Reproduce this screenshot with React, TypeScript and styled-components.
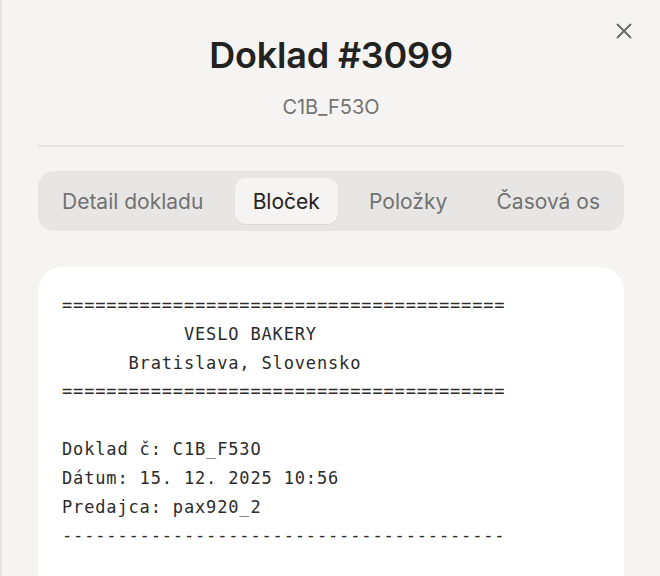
import React from 'react';
import styled, { createGlobalStyle } from 'styled-components';

const GlobalStyle = createGlobalStyle`
  html, body {
    margin: 0;
    padding: 0;
    background: #f5f4f2;
    overflow: hidden;
  }
  * {
    box-sizing: border-box;
  }
`;

const Drawer = styled.div`
  position: relative;
  width: 660px;
  height: 576px;
  overflow: hidden;
  background: #f5f4f2;
  border-left: 2px solid #e8e6e3;
  padding: 0 36px 0 36px;
  font-family: Inter, 'Noto Sans', sans-serif;
  display: flex;
  flex-direction: column;
  & > * {
    flex-shrink: 0;
  }
`;

const CloseButton = styled.button`
  position: absolute;
  top: 21px;
  right: 26px;
  width: 20px;
  height: 20px;
  padding: 0;
  border: none;
  background: none;
  display: flex;
  align-items: center;
  justify-content: center;
  color: #666;
  cursor: pointer;
`;

const Header = styled.header`
  display: flex;
  flex-direction: column;
  align-items: center;
  padding-top: 33px;
`;

const Title = styled.h1`
  margin: 0;
  font-size: 36px;
  line-height: 44px;
  font-weight: 600;
  color: #222220;
  letter-spacing: -0.2px;
`;

const Subtitle = styled.div`
  margin-top: 16px;
  font-size: 20px;
  line-height: 28px;
  color: #737373;
`;

const Divider = styled.hr`
  width: 100%;
  margin: 24px 0 24px;
  border: none;
  border-top: 2px solid #e6e5e2;
`;

const Tabs = styled.div`
  display: flex;
  justify-content: space-between;
  align-items: center;
  height: 60px;
  padding: 0 6px;
  background: #e7e6e4;
  border-radius: 16px;
`;

const Tab = styled.button<{ $active?: boolean }>`
  height: 46px;
  padding: 0 18px;
  border: none;
  border-radius: 11px;
  font-family: Inter, 'Noto Sans', sans-serif;
  font-size: 21px;
  color: ${(p) => (p.$active ? '#222220' : '#727272')};
  background: ${(p) => (p.$active ? '#f5f4f2' : 'transparent')};
  box-shadow: ${(p) => (p.$active ? '0 1px 2px rgba(0,0,0,0.06)' : 'none')};
  cursor: pointer;
`;

const ReceiptCard = styled.div`
  margin-top: 36px;
  background: #ffffff;
  border-radius: 24px;
  padding: 24px 24px;
  min-height: 420px;
`;

const ReceiptText = styled.pre`
  margin: 0;
  font-family: 'DejaVu Sans Mono', 'Liberation Mono', monospace;
  font-size: 17px;
  line-height: 28.8px;
  letter-spacing: 0.85px;
  color: #2b2b2a;
  white-space: pre;
`;

const receiptLines = [
  '========================================',
  '           VESLO BAKERY',
  '      Bratislava, Slovensko',
  '========================================',
  '',
  'Doklad č: C1B_F53O',
  'Dátum: 15. 12. 2025 10:56',
  'Predajca: pax920_2',
  '----------------------------------------',
];

const tabs = ['Detail dokladu', 'Bloček', 'Položky', 'Časová os'];

const App = () => {
  return (
    <>
      <GlobalStyle />
      <Drawer>
        <CloseButton aria-label="Zavrieť">
          <svg width="16" height="16" viewBox="0 0 16 16" fill="none">
            <path d="M1.5 1.5L14.5 14.5M14.5 1.5L1.5 14.5" stroke="currentColor" strokeWidth="1.8" strokeLinecap="round" />
          </svg>
        </CloseButton>
        <Header>
          <Title>Doklad #3099</Title>
          <Subtitle>C1B_F53O</Subtitle>
        </Header>
        <Divider />
        <Tabs>
          {tabs.map((t) => (
            <Tab key={t} $active={t === 'Bloček'}>
              {t}
            </Tab>
          ))}
        </Tabs>
        <ReceiptCard>
          <ReceiptText>{receiptLines.join('\n')}</ReceiptText>
        </ReceiptCard>
      </Drawer>
    </>
  );
};

export default App;
